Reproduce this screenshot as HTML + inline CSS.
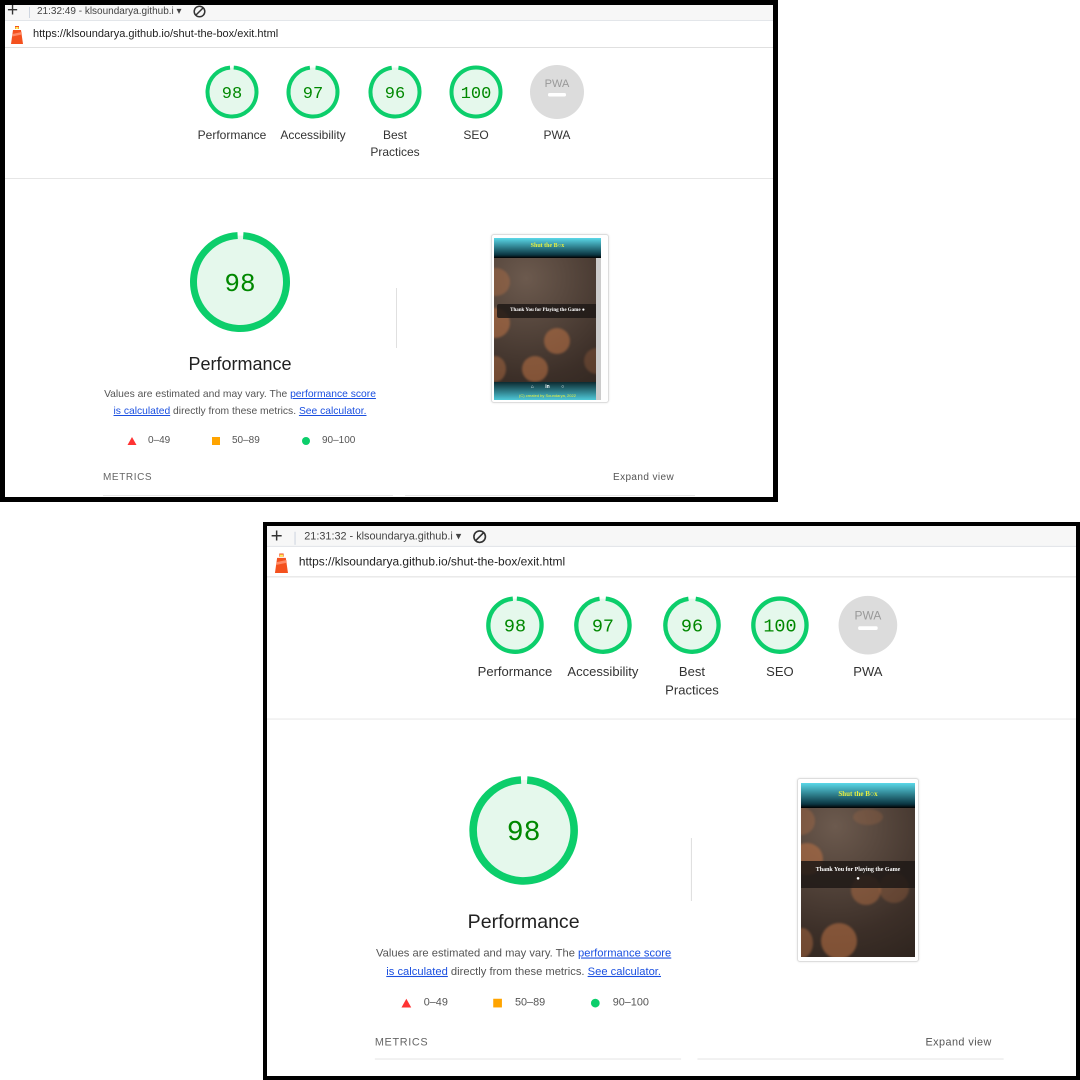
<!DOCTYPE html>
<html><head><meta charset="utf-8"><style>
*{margin:0;padding:0;box-sizing:border-box}
body{width:1080px;height:1080px;background:#fff;position:relative;overflow:hidden;font-family:"Liberation Sans",Arial,sans-serif;color:#212121}
.panel{position:absolute;background:#fff;overflow:hidden}
.c{position:absolute;left:0;top:0;width:780px;height:520px;transform-origin:0 0}
.a{position:absolute;white-space:nowrap}
.tb{position:absolute;left:0;top:0;width:1000px;height:21px;background:#f7f7f7;border-bottom:1px solid #e3e6ea}
.ur{position:absolute;left:0;top:21px;width:1000px;height:27px;border-bottom:1px solid #e0e0e0}
.lbl{font-size:12px;color:#333;text-align:center;width:90px;line-height:17px}
.hr{position:absolute;left:0;width:1000px;height:1px;background:#e6e6e6}
a{color:#1a4fe0;text-decoration:underline}
.thumb{position:absolute;background:#fff;border:1px solid #ddd;border-radius:3px;box-shadow:0 0 2px rgba(0,0,0,.1)}
.img{position:absolute;overflow:hidden;background:radial-gradient(circle at 30% 25%,#6c5a4e,#3c2f28 70%,#2e241e)}
.bok{position:absolute;border-radius:50%;background:rgba(190,115,70,.55);filter:blur(1px)}
.tt{font-size:10px;color:#444}
</style></head><body>

<!-- PANEL 1 -->
<div class="panel" style="left:0;top:0;width:778px;height:502px;border:5px solid #000">
<div class="c" style="left:-5px;top:-5px">
 <div class="tb" style="top:5px;height:16px"></div>
 <div class="a" style="left:7px;top:1px;font-size:19px;color:#333;line-height:20px">+</div>
 <div class="a" style="left:29px;top:7px;width:1px;height:11px;background:#cfd6e0"></div>
 <div class="a tt" style="left:37px;top:6px">21:32:49 - klsoundarya.github.i ▾</div>
 <svg class="a" style="left:193px;top:5px" width="13" height="13" viewBox="0 0 13 13"><circle cx="6.5" cy="6.5" r="5.3" fill="none" stroke="#333" stroke-width="1.5"/><line x1="3" y1="10" x2="10" y2="3" stroke="#333" stroke-width="1.5"/></svg>
 <div class="ur"></div>
 <svg class="a" style="left:10px;top:25px" width="14" height="20" viewBox="0 0 14 20"><path d="M5 1h4v3H5z" fill="#f4511e"/><rect x="5.5" y="2" width="3" height="2" fill="#ffee58"/><path d="M3 5h8l2 14H1z" fill="#f4511e"/><path d="M2.6 9l9-2 .3 2.5-9.5 2z" fill="#ff8a65"/></svg>
 <div class="a" style="left:33px;top:28px;font-size:11px;color:#222">https://klsoundarya.github.io/shut-the-box/exit.html</div>

 <svg class="a" style="left:200px;top:60px" width="400" height="64" viewBox="0 0 400 64">
  <g font-family="Liberation Mono,monospace" font-size="17" fill="#008800" text-anchor="middle">
  <g transform="translate(32,32)"><circle r="24.5" fill="#e5f8ec"/><circle r="24.5" fill="none" stroke="#0cce6b" stroke-width="4" stroke-dasharray="150 4" transform="rotate(-86)"/><text y="6">98</text></g>
  <g transform="translate(113,32)"><circle r="24.5" fill="#e5f8ec"/><circle r="24.5" fill="none" stroke="#0cce6b" stroke-width="4" stroke-dasharray="148 6" transform="rotate(-84)"/><text y="6">97</text></g>
  <g transform="translate(195,32)"><circle r="24.5" fill="#e5f8ec"/><circle r="24.5" fill="none" stroke="#0cce6b" stroke-width="4" stroke-dasharray="147 7" transform="rotate(-82)"/><text y="6">96</text></g>
  <g transform="translate(276,32)"><circle r="24.5" fill="#e5f8ec"/><circle r="24.5" fill="none" stroke="#0cce6b" stroke-width="4"/><text y="6">100</text></g>
  <g transform="translate(357,32)"><circle r="27" fill="#dcdcdc"/><text y="-5" font-size="11" fill="#999" font-family="Liberation Sans,sans-serif">PWA</text><rect x="-9" y="1" width="18" height="3.5" rx="1.5" fill="#fff"/></g>
  </g>
 </svg>
 <div class="a lbl" style="left:187px;top:127px">Performance</div>
 <div class="a lbl" style="left:268px;top:127px">Accessibility</div>
 <div class="a lbl" style="left:350px;top:127px;white-space:normal">Best<br>Practices</div>
 <div class="a lbl" style="left:431px;top:127px">SEO</div>
 <div class="a lbl" style="left:512px;top:127px">PWA</div>
 <div class="hr" style="top:178px"></div>

 <svg class="a" style="left:189px;top:231px" width="102" height="102" viewBox="0 0 102 102">
  <g transform="translate(51,51)"><circle r="46.5" fill="#e5f8ec"/><circle r="46.5" fill="none" stroke="#0cce6b" stroke-width="7" stroke-dasharray="286 6.2" transform="rotate(-86)"/><text y="9" text-anchor="middle" font-family="Liberation Mono,monospace" font-size="26" fill="#008800">98</text></g>
 </svg>
 <div class="a" style="left:140px;top:354px;width:200px;text-align:center;font-size:18px;color:#212121">Performance</div>
 <div class="a" style="left:101px;top:386px;width:278px;text-align:center;font-size:10.3px;color:#555;line-height:17px;white-space:normal">Values are estimated and may vary. The <a>performance score</a> <a>is calculated</a> directly from these metrics. <a>See calculator.</a></div>
 <svg class="a" style="left:127px;top:436px" width="10" height="10"><path d="M5 1L9.5 9h-9z" fill="#ff3333"/></svg>
 <div class="a" style="left:148px;top:435px;font-size:10px;color:#555">0–49</div>
 <div class="a" style="left:212px;top:437px;width:8px;height:8px;background:#ffa400"></div>
 <div class="a" style="left:232px;top:435px;font-size:10px;color:#555">50–89</div>
 <div class="a" style="left:302px;top:437px;width:8px;height:8px;border-radius:50%;background:#0cce6b"></div>
 <div class="a" style="left:322px;top:435px;font-size:10px;color:#555">90–100</div>
 <div class="a" style="left:396px;top:288px;width:1px;height:60px;background:#e0e0e0"></div>
 <div class="a" style="left:103px;top:472px;font-size:10px;color:#666;letter-spacing:.6px">METRICS</div>
 <div class="a" style="left:613px;top:472px;font-size:10px;color:#555;letter-spacing:.4px">Expand view</div>
 <div class="a" style="left:103px;top:495px;width:290px;height:1px;background:#e6e6e6"></div>
 <div class="a" style="left:405px;top:495px;width:290px;height:1px;background:#e6e6e6"></div>
</div>
</div>

<!-- PANEL 2 -->
<div class="panel" style="left:263px;top:522px;width:817px;height:558px;border:4px solid #000">
<div class="c" style="left:-4px;top:-4px;transform:scale(1.086)">
 <div class="tb" style="top:3px;height:20px"></div>
 <div class="a" style="left:7px;top:4px;font-size:19px;color:#333;line-height:20px">+</div>
 <div class="a" style="left:29px;top:9px;width:1px;height:12px;background:#cfd6e0"></div>
 <div class="a tt" style="left:38px;top:8px">21:31:32 - klsoundarya.github.i ▾</div>
 <svg class="a" style="left:193px;top:7px" width="13" height="13" viewBox="0 0 13 13"><circle cx="6.5" cy="6.5" r="5.3" fill="none" stroke="#333" stroke-width="1.5"/><line x1="3" y1="10" x2="10" y2="3" stroke="#333" stroke-width="1.5"/></svg>
 <div class="ur" style="top:23px;height:28px"></div>
 <svg class="a" style="left:10px;top:28px" width="14" height="20" viewBox="0 0 14 20"><path d="M5 1h4v3H5z" fill="#f4511e"/><rect x="5.5" y="2" width="3" height="2" fill="#ffee58"/><path d="M3 5h8l2 14H1z" fill="#f4511e"/><path d="M2.6 9l9-2 .3 2.5-9.5 2z" fill="#ff8a65"/></svg>
 <div class="a" style="left:33px;top:31px;font-size:11px;color:#222">https://klsoundarya.github.io/shut-the-box/exit.html</div>

 <svg class="a" style="left:200px;top:63px" width="400" height="64" viewBox="0 0 400 64">
  <g font-family="Liberation Mono,monospace" font-size="17" fill="#008800" text-anchor="middle">
  <g transform="translate(32,32)"><circle r="24.5" fill="#e5f8ec"/><circle r="24.5" fill="none" stroke="#0cce6b" stroke-width="4" stroke-dasharray="150 4" transform="rotate(-86)"/><text y="6">98</text></g>
  <g transform="translate(113,32)"><circle r="24.5" fill="#e5f8ec"/><circle r="24.5" fill="none" stroke="#0cce6b" stroke-width="4" stroke-dasharray="148 6" transform="rotate(-84)"/><text y="6">97</text></g>
  <g transform="translate(195,32)"><circle r="24.5" fill="#e5f8ec"/><circle r="24.5" fill="none" stroke="#0cce6b" stroke-width="4" stroke-dasharray="147 7" transform="rotate(-82)"/><text y="6">96</text></g>
  <g transform="translate(276,32)"><circle r="24.5" fill="#e5f8ec"/><circle r="24.5" fill="none" stroke="#0cce6b" stroke-width="4"/><text y="6">100</text></g>
  <g transform="translate(357,32)"><circle r="27" fill="#dcdcdc"/><text y="-5" font-size="11" fill="#999" font-family="Liberation Sans,sans-serif">PWA</text><rect x="-9" y="1" width="18" height="3.5" rx="1.5" fill="#fff"/></g>
  </g>
 </svg>
 <div class="a lbl" style="left:187px;top:130px">Performance</div>
 <div class="a lbl" style="left:268px;top:130px">Accessibility</div>
 <div class="a lbl" style="left:350px;top:130px;white-space:normal">Best<br>Practices</div>
 <div class="a lbl" style="left:431px;top:130px">SEO</div>
 <div class="a lbl" style="left:512px;top:130px">PWA</div>
 <div class="hr" style="top:181px"></div>

 <svg class="a" style="left:189px;top:233px" width="102" height="102" viewBox="0 0 102 102">
  <g transform="translate(51,51)"><circle r="46.5" fill="#e5f8ec"/><circle r="46.5" fill="none" stroke="#0cce6b" stroke-width="7" stroke-dasharray="286 6.2" transform="rotate(-86)"/><text y="9" text-anchor="middle" font-family="Liberation Mono,monospace" font-size="26" fill="#008800">98</text></g>
 </svg>
 <div class="a" style="left:140px;top:358px;width:200px;text-align:center;font-size:18px;color:#212121">Performance</div>
 <div class="a" style="left:101px;top:389px;width:278px;text-align:center;font-size:10.3px;color:#555;line-height:17px;white-space:normal">Values are estimated and may vary. The <a>performance score</a> <a>is calculated</a> directly from these metrics. <a>See calculator.</a></div>
 <svg class="a" style="left:127px;top:438px" width="10" height="10"><path d="M5 1L9.5 9h-9z" fill="#ff3333"/></svg>
 <div class="a" style="left:148px;top:437px;font-size:10px;color:#555">0–49</div>
 <div class="a" style="left:212px;top:439px;width:8px;height:8px;background:#ffa400"></div>
 <div class="a" style="left:232px;top:437px;font-size:10px;color:#555">50–89</div>
 <div class="a" style="left:302px;top:439px;width:8px;height:8px;border-radius:50%;background:#0cce6b"></div>
 <div class="a" style="left:322px;top:437px;font-size:10px;color:#555">90–100</div>
 <div class="a" style="left:394px;top:291px;width:1px;height:58px;background:#e0e0e0"></div>
 <div class="a" style="left:103px;top:474px;font-size:10px;color:#666;letter-spacing:.6px">METRICS</div>
 <div class="a" style="left:610px;top:474px;font-size:10px;color:#555;letter-spacing:.4px">Expand view</div>
 <div class="a" style="left:103px;top:494px;width:282px;height:1px;background:#e6e6e6"></div>
 <div class="a" style="left:400px;top:494px;width:282px;height:1px;background:#e6e6e6"></div>
</div>
</div>

<!-- THUMB 1 -->
<div class="thumb" style="left:491px;top:234px;width:118px;height:169px"></div>
<div class="img" style="left:494px;top:238px;width:107px;height:162px">
 <div class="bok" style="left:-12px;top:30px;width:28px;height:28px;opacity:.7"></div>
 <div class="bok" style="left:-14px;top:70px;width:30px;height:30px"></div>
 <div class="bok" style="left:50px;top:90px;width:26px;height:26px"></div>
 <div class="bok" style="left:28px;top:118px;width:26px;height:26px"></div>
 <div class="bok" style="left:-10px;top:118px;width:22px;height:26px;opacity:.8"></div>
 <div class="bok" style="left:90px;top:110px;width:26px;height:26px;opacity:.5"></div>
 <div style="position:absolute;left:0;top:0;width:107px;height:20px;background:linear-gradient(#5ad8e8,#0a3440 85%,#000)"></div>
 <div style="position:absolute;left:0;top:5px;width:107px;text-align:center;font:bold 6px 'Liberation Serif',serif;color:#e8f040">Shut the B○x</div>
 <div style="position:absolute;left:3px;top:66px;width:101px;height:14px;background:rgba(30,25,22,.85);border-radius:2px"></div>
 <div style="position:absolute;left:0;top:70px;width:107px;text-align:center;font:bold 5px 'Liberation Serif',serif;color:#fff">Thank You for Playing the Game ●</div>
 <div style="position:absolute;left:0;top:144px;width:107px;height:18px;background:linear-gradient(#0c2a30,#4ec8d8)"></div>
 <div style="position:absolute;left:0;top:146px;width:107px;text-align:center;font:bold 5px sans-serif;color:#fff;word-spacing:10px">⌂ in ○</div>
 <div style="position:absolute;left:0;top:155px;width:107px;text-align:center;font:4px sans-serif;color:#e8f040">(C) created by Soundarya, 2022</div>
 <div style="position:absolute;left:102px;top:20px;width:5px;height:142px;background:#ccc"></div>
</div>

<!-- THUMB 2 -->
<div class="thumb" style="left:797px;top:778px;width:122px;height:184px"></div>
<div class="img" style="left:801px;top:783px;width:114px;height:174px">
 <div class="bok" style="left:-14px;top:24px;width:28px;height:28px;opacity:.6"></div>
 <div class="bok" style="left:-10px;top:60px;width:32px;height:32px"></div>
 <div class="bok" style="left:50px;top:92px;width:30px;height:30px;opacity:.8"></div>
 <div class="bok" style="left:78px;top:90px;width:30px;height:30px;opacity:.5"></div>
 <div class="bok" style="left:20px;top:140px;width:36px;height:36px"></div>
 <div class="bok" style="left:-10px;top:145px;width:22px;height:30px;opacity:.8"></div>
 <div class="bok" style="left:52px;top:26px;width:30px;height:16px;opacity:.4"></div>
 <div style="position:absolute;left:0;top:0;width:114px;height:25px;background:linear-gradient(#5ad8e8,#0a3440 85%,#000)"></div>
 <div style="position:absolute;left:0;top:7px;width:114px;text-align:center;font:bold 7px 'Liberation Serif',serif;color:#e8f040">Shut the B○x</div>
 <div style="position:absolute;left:0;top:78px;width:114px;height:27px;background:rgba(30,25,22,.85)"></div>
 <div style="position:absolute;left:0;top:83px;width:114px;text-align:center;font:bold 6px 'Liberation Serif',serif;color:#fff;line-height:9px">Thank You for Playing the Game<br>●</div>
</div>
</body></html>
